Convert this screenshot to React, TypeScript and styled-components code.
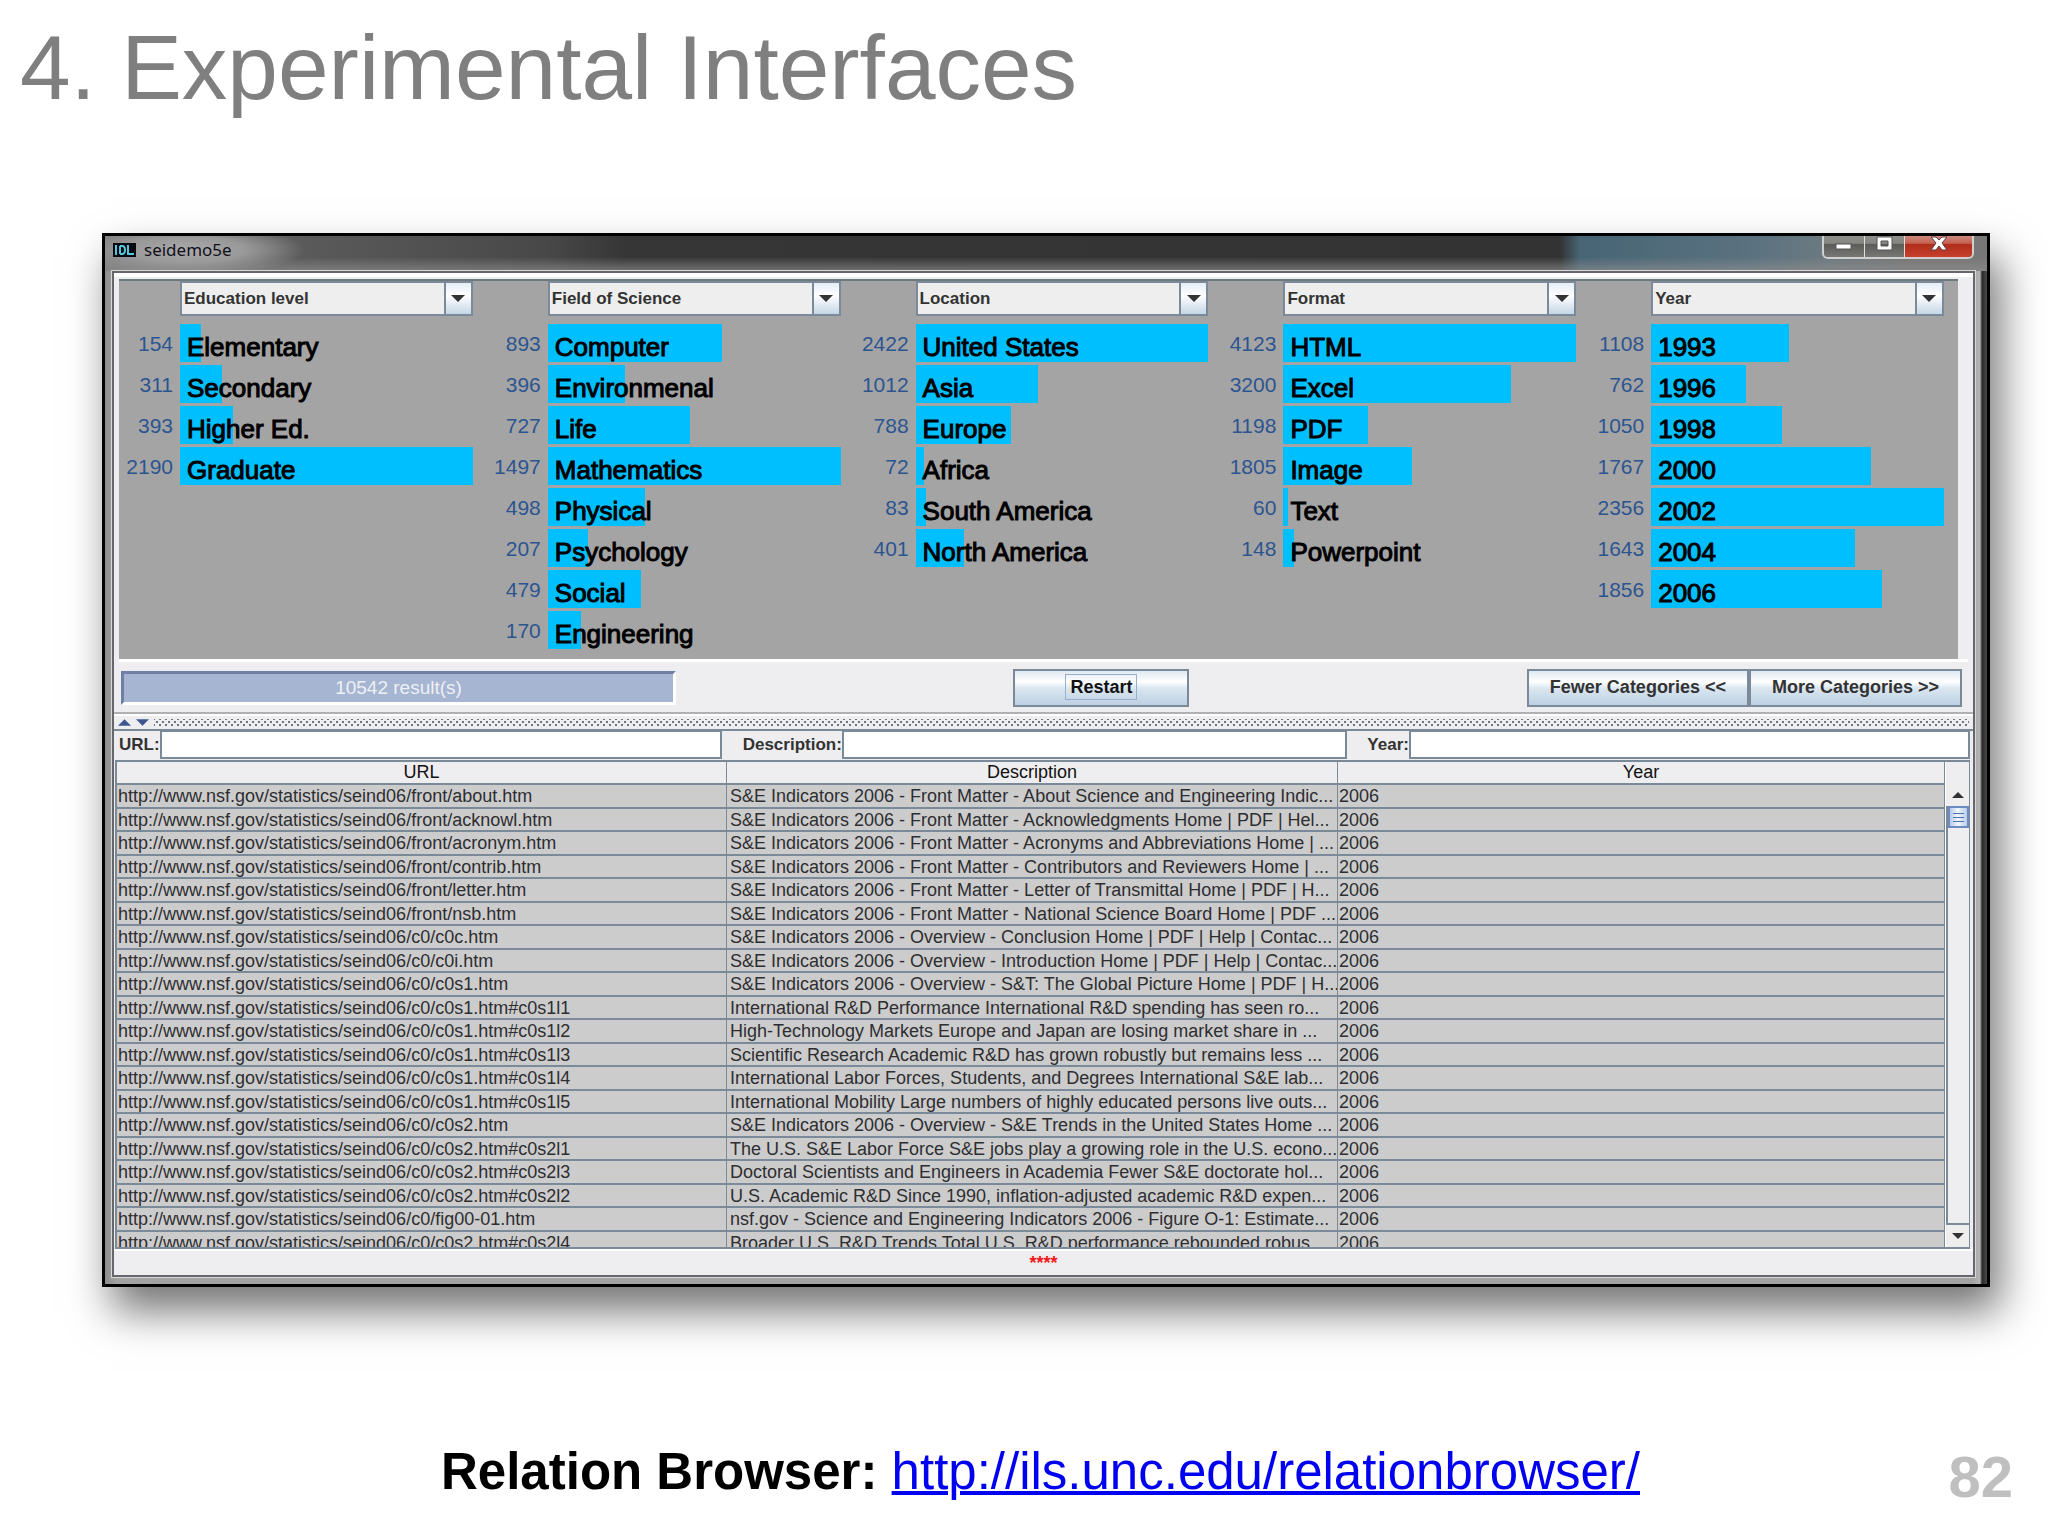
import React from "react";
import styled, { createGlobalStyle, css } from "styled-components";

const sans = '"Liberation Sans", Arial, Helvetica, sans-serif';
const steel = "#7a8a99";

const Global = createGlobalStyle`
  *, *::before, *::after { box-sizing: border-box; }
  body { margin: 0; background: #fff; font-family: ${sans}; }
`;

const Slide = styled.main`
  display: flex;
  flex-direction: column;
  min-height: 100vh;
  overflow: hidden;
`;

const Title = styled.h1`
  margin: 0;
  padding: 16px 20px 0;
  height: 233px;
  font-size: 91px;
  line-height: 104px;
  font-weight: 400;
  color: #7f7f7f;
`;

const Frame = styled.section`
  margin: 0 58px 0 102px;
  border: 3px solid #000;
  background: linear-gradient(90deg, #8d8d8d, #a3a3a3 12px, #a3a3a3 calc(100% - 14px), #b4b5b4 calc(100% - 7px), #2a2a2a calc(100% - 5px), #4a4a4a 100%);
  box-shadow: 10px 24px 40px 0 rgba(0, 0, 0, 0.55);
`;

const TitleBar = styled.header`
  display: flex;
  align-items: center;
  justify-content: space-between;
  height: 35px;
  padding: 0 13px 0 8px;
  background:
    radial-gradient(ellipse 120px 26px at 80px 14px, #aaa 0%, #999 50%, rgba(110, 110, 110, 0) 100%),
    linear-gradient(180deg, rgba(0, 0, 0, 0) 60%, rgba(140, 140, 140, 0.7) 100%),
    linear-gradient(90deg, #777 0, #5a5a5a 200px, #484848 440px, #363636 520px, #333 1455px, #476575 1475px, #5b7280 1650px, #6c7a80 1720px, #777 1800px);
`;

const AppName = styled.div`
  display: flex;
  align-items: center;
  gap: 8px;
  height: 100%;
  padding-bottom: 8px;
  font: 17px "Noto Sans", "Open Sans", sans-serif;
  color: #10101c;
`;

const WindowButtons = styled.div`
  display: flex;
  align-self: flex-start;
  height: 23px;
  border: 2px solid #d0d0d0;
  border-top: 0;
  border-radius: 0 0 6px 6px;
  overflow: hidden;
`;

const WindowButton = styled.button<{ $close?: boolean }>`
  display: flex;
  align-items: flex-start;
  justify-content: center;
  width: ${(p) => (p.$close ? 68 : 40)}px;
  height: 100%;
  padding: 0;
  border: 0;
  border-left: 1px solid #ddd;
  background: ${(p) =>
    p.$close
      ? "linear-gradient(180deg, #cc8a7e 0, #c4604f 35%, #b02e1c 40%, #c8402c 100%)"
      : "linear-gradient(180deg, #8f8f8c 0, #858582 35%, #5c5c5a 40%, #777774 100%)"};
  &:first-child { border-left: 0; }
`;

const Client = styled.div`
  margin: 0 12px 7px 7px;
  border: 2px solid #66666c;
  outline: 1px solid #d8d8d8;
  background: #eeeef0;
`;

const TopPane = styled.div`
  padding: 6px 5px 0 5px;
  border-bottom: 2px solid #b0b0b2;
  background: linear-gradient(180deg, #fff 0, #fff 4px, #eeedef 4px);
`;

const Facets = styled.div`
  display: grid;
  grid-template-columns: repeat(5, 1fr);
  height: 380px;
  margin-right: 10px;
  border-top: 2px solid #6f787c;
  background: #a5a4a5;
`;

const Facet = styled.section`
  display: grid;
  grid-template-columns: 61px 1fr;
  align-content: start;
  padding-right: 14px;
`;

const Combo = styled.label`
  grid-column: 2;
  position: relative;
  display: block;
  height: 35px;
  margin-bottom: 8px;
`;

const ComboSelect = styled.select`
  appearance: none;
  display: block;
  width: 100%;
  height: 100%;
  padding: 0 30px 0 2px;
  border: 2px solid ${steel};
  border-radius: 0;
  background: #eeeeee;
  font: bold 17px ${sans};
  color: #333;
`;

const ComboArrow = styled.span`
  position: absolute;
  top: 0;
  right: 0;
  display: grid;
  place-items: center;
  width: 29px;
  height: 35px;
  border: 2px solid ${steel};
  background: linear-gradient(180deg, #e4edf5 0, #fff 40%, #c4d6e6 100%);
  pointer-events: none;
`;

const FacetList = styled.ul`
  grid-column: 1 / -1;
  display: flex;
  flex-direction: column;
  gap: 3px;
  margin: 0;
  padding: 0;
  list-style: none;
`;

const FacetRow = styled.li`
  display: grid;
  grid-template-columns: 61px 1fr;
  height: 38px;
`;

const Count = styled.span`
  padding: 8px 7px 0 0;
  font-size: 21px;
  line-height: 24px;
  text-align: right;
  color: #2c5590;
`;

const Track = styled.span`
  display: grid;
`;

const Bar = styled.span`
  grid-area: 1 / 1;
  background: #00bfff;
`;

const FacetLabel = styled.span`
  grid-area: 1 / 1;
  padding: 8px 0 0 7px;
  font-size: 26px;
  line-height: 30px;
  color: #000;
  white-space: nowrap;
  -webkit-text-stroke: 1px #000;
`;

const Actions = styled.div`
  display: flex;
  justify-content: space-between;
  align-items: center;
  height: 53px;
  padding: 2px 6px 1px 2px;
  border-top: 3px solid #fff;
`;

const Results = styled.output`
  display: block;
  width: 555px;
  height: 34px;
  border: 3px solid;
  border-color: #6f7fa6 #fff #fff #6f7fa6;
  background: #a6b5d2;
  font-size: 19px;
  line-height: 28px;
  text-align: center;
  color: #eef0f4;
`;

const PushButton = styled.button`
  height: 38px;
  padding: 0 21px;
  border: 2px solid ${steel};
  background: linear-gradient(180deg, #dfe9f2 0, #fff 32%, #dbe7f1 50%, #bdd0e2 100%);
  font: bold 18px ${sans};
  color: #333;
  white-space: nowrap;
`;

const Restart = styled(PushButton)`
  width: 176px;
  padding: 0;
  color: #111;
  span { padding: 2px 4px; border: 1px solid #98b0cc; }
`;

const CategoryButtons = styled.div`
  display: flex;
`;

const Divider = styled.div`
  display: flex;
  align-items: flex-start;
  gap: 5px;
  height: 17px;
  padding: 3px 4px 0;
  border-top: 2px solid #fff;
  border-bottom: 2px solid ${steel};
`;

const Grip = styled.span`
  flex: 1;
  height: 8px;
  background-image: radial-gradient(circle, #6e7480 1px, transparent 1px), radial-gradient(circle, #6e7480 1px, transparent 1px);
  background-size: 6px 6px;
  background-position: 0 0, 3px 3px;
`;

const Filters = styled.form`
  display: grid;
  grid-template-columns: 609fr 623fr 623fr;
  height: 28px;
  padding: 0 3px 0 2px;
`;

const Filter = styled.label<{ $lead?: number; $tail?: number }>`
  display: flex;
  align-items: center;
  padding-left: ${(p) => p.$lead ?? 3}px;
  padding-right: ${(p) => p.$tail ?? 0}px;
  font-size: 17px;
  font-weight: 700;
  color: #333;
`;

const FilterInput = styled.input`
  flex: 1;
  min-width: 0;
  height: 28px;
  border: 2px solid ${steel};
  border-top-width: 1px;
  background: #fff;
  font: 17px ${sans};
`;

const Grid = styled.div`
  display: grid;
  grid-template-columns: 1fr 24px;
  height: 489px;
  margin: 1px 3px 0 1px;
  border: 2px solid ${steel};
  border-right-width: 1px;
  overflow: hidden;
`;

const TableClip = styled.div`
  overflow: hidden;
`;

const Table = styled.table`
  width: 100%;
  table-layout: fixed;
  border-collapse: separate;
  border-spacing: 0;
  font-size: 18px;
  color: #2e2e30;
`;

const line = css`
  border-right: 1px solid ${steel};
  border-bottom: 2px solid ${steel};
`;

const Th = styled.th<{ $w?: string }>`
  ${line}
  width: ${(p) => p.$w ?? "auto"};
  height: 23px;
  padding: 0;
  background: #eeeef0;
  line-height: 21px;
  font-weight: 400;
  color: #111;
`;

const Row = styled.tr`
  height: 24px;
  line-height: 20px;
  background: #cccccd;
  &:nth-child(even) { height: 23px; }
`;

const Td = styled.td<{ $indent?: number }>`
  ${line}
  padding: 0 0 0 ${(p) => p.$indent ?? 1}px;
  white-space: nowrap;
  overflow: hidden;
`;

const ScrollBar = styled.div`
  display: flex;
  flex-direction: column;
  padding-top: 22px;
  border-left: 1px solid #fff;
`;

const ScrollButton = styled.button`
  display: grid;
  place-items: center;
  height: 22px;
  padding: 0;
  border: 0;
  background: #eee;
`;

const ScrollTrack = styled.div`
  flex: 1;
  border-left: 2px solid ${steel};
  border-bottom: 2px solid ${steel};
  background: #eeeef0;
`;

const Thumb = styled.div`
  display: flex;
  flex-direction: column;
  justify-content: center;
  gap: 3px;
  height: 22px;
  padding: 0 3px;
  border: 2px solid #6c8cc0;
  background: linear-gradient(90deg, #b5cbe8, #f2f6fb 45%, #b9cfe8);
`;

const ThumbLine = styled.span`
  height: 1px;
  background: #4f73b5;
`;

const Status = styled.p`
  margin: 0;
  height: 26px;
  border-top: 2px solid #fff;
  font-size: 18px;
  line-height: 25px;
  font-weight: 700;
  text-align: center;
  color: #f01818;
`;

const Caption = styled.footer`
  display: flex;
  align-items: flex-end;
  margin-top: auto;
  padding: 0 35px 32px 441px;
  line-height: 64px;
  font-size: 51px;
  white-space: pre;
`;

const Lead = styled.strong`
  color: #000;
`;

const Link = styled.a`
  color: #0000f0;
  text-decoration: underline;
  text-decoration-thickness: 4px;
`;

const PageNumber = styled.span`
  margin-left: auto;
  font-size: 58px;
  line-height: 54px;
  font-weight: 700;
  color: #bfbfbf;
`;

type FacetData = { name: string; items: [string, number][] };

const facets: FacetData[] = [
  { name: "Education level", items: [["Elementary", 154], ["Secondary", 311], ["Higher Ed.", 393], ["Graduate", 2190]] },
  {
    name: "Field of Science",
    items: [["Computer", 893], ["Environmenal", 396], ["Life", 727], ["Mathematics", 1497], ["Physical", 498], ["Psychology", 207], ["Social", 479], ["Engineering", 170]],
  },
  {
    name: "Location",
    items: [["United States", 2422], ["Asia", 1012], ["Europe", 788], ["Africa", 72], ["South America", 83], ["North America", 401]],
  },
  { name: "Format", items: [["HTML", 4123], ["Excel", 3200], ["PDF", 1198], ["Image", 1805], ["Text", 60], ["Powerpoint", 148]] },
  {
    name: "Year",
    items: [["1993", 1108], ["1996", 762], ["1998", 1050], ["2000", 1767], ["2002", 2356], ["2004", 1643], ["2006", 1856]],
  },
];

const base = "http://www.nsf.gov/statistics/seind06/";

const rows: [string, string][] = [
  ["front/about.htm", "S&E Indicators 2006 - Front Matter - About Science and Engineering Indic..."],
  ["front/acknowl.htm", "S&E Indicators 2006 - Front Matter - Acknowledgments Home | PDF | Hel..."],
  ["front/acronym.htm", "S&E Indicators 2006 - Front Matter - Acronyms and Abbreviations Home | ..."],
  ["front/contrib.htm", "S&E Indicators 2006 - Front Matter - Contributors and Reviewers Home | ..."],
  ["front/letter.htm", "S&E Indicators 2006 - Front Matter - Letter of Transmittal Home | PDF | H..."],
  ["front/nsb.htm", "S&E Indicators 2006 - Front Matter - National Science Board Home | PDF ..."],
  ["c0/c0c.htm", "S&E Indicators 2006 - Overview - Conclusion Home | PDF | Help | Contac..."],
  ["c0/c0i.htm", "S&E Indicators 2006 - Overview - Introduction Home | PDF | Help | Contac..."],
  ["c0/c0s1.htm", "S&E Indicators 2006 - Overview - S&T: The Global Picture Home | PDF | H..."],
  ["c0/c0s1.htm#c0s1l1", "International R&D Performance International R&D spending has seen ro..."],
  ["c0/c0s1.htm#c0s1l2", "High-Technology Markets Europe and Japan are losing market share in ..."],
  ["c0/c0s1.htm#c0s1l3", "Scientific Research Academic R&D has grown robustly but remains less ..."],
  ["c0/c0s1.htm#c0s1l4", "International Labor Forces, Students, and Degrees International S&E lab..."],
  ["c0/c0s1.htm#c0s1l5", "International Mobility Large numbers of highly educated persons live outs..."],
  ["c0/c0s2.htm", "S&E Indicators 2006 - Overview - S&E Trends in the United States Home ..."],
  ["c0/c0s2.htm#c0s2l1", "The U.S. S&E Labor Force S&E jobs play a growing role in the U.S. econo..."],
  ["c0/c0s2.htm#c0s2l3", "Doctoral Scientists and Engineers in Academia Fewer S&E doctorate hol..."],
  ["c0/c0s2.htm#c0s2l2", "U.S. Academic R&D Since 1990, inflation-adjusted academic R&D expen..."],
  ["c0/fig00-01.htm", "nsf.gov - Science and Engineering Indicators 2006 - Figure O-1: Estimate..."],
  ["c0/c0s2.htm#c0s2l4", "Broader U.S. R&D Trends Total U.S. R&D performance rebounded robus..."],
];

const Triangle = ({ up, w = 14, h = 7, fill = "#333" }: { up?: boolean; w?: number; h?: number; fill?: string }) => (
  <svg width={w} height={h} viewBox="0 0 14 7" aria-hidden="true">
    <path d={up ? "M0 7L7 0L14 7Z" : "M0 0L7 7L14 0Z"} fill={fill} />
  </svg>
);

const AppIcon = () => (
  <svg width="23" height="14" viewBox="0 0 23 14" aria-hidden="true">
    <rect width="23" height="14" fill="#050a10" />
    <path d="M3 2V12M7 3V11M7 3H9Q12 3 12 7T9 11H7M15 2V11H21" fill="none" stroke="#57c4dc" strokeWidth="2" />
  </svg>
);

const FacetColumn = ({ facet }: { facet: FacetData }) => {
  const max = Math.max(...facet.items.map(([, n]) => n));
  return (
    <Facet>
      <Combo>
        <ComboSelect aria-label={`Category: ${facet.name}`} defaultValue={facet.name}>
          <option>{facet.name}</option>
        </ComboSelect>
        <ComboArrow>
          <Triangle />
        </ComboArrow>
      </Combo>
      <FacetList>
        {facet.items.map(([label, n]) => (
          <FacetRow key={label}>
            <Count>{n}</Count>
            <Track>
              <Bar style={{ width: `${(n / max) * 100}%` }} />
              <FacetLabel>{label}</FacetLabel>
            </Track>
          </FacetRow>
        ))}
      </FacetList>
    </Facet>
  );
};

export default function App() {
  return (
    <Slide>
      <Global />
      <Title>4. Experimental Interfaces</Title>
      <Frame>
        <TitleBar>
          <AppName>
            <AppIcon />
            seidemo5e
          </AppName>
          <WindowButtons>
            <WindowButton aria-label="Minimize">
              <svg width="18" height="16" viewBox="0 0 18 16"><rect x="1" y="8" width="15" height="5" fill="#fff" stroke="#555" /></svg>
            </WindowButton>
            <WindowButton aria-label="Maximize">
              <svg width="18" height="16" viewBox="0 0 18 16">
                <path d="M1 1H16V14H1ZM5 5V10H12V5Z" fill="#fff" fillRule="evenodd" stroke="#555" />
              </svg>
            </WindowButton>
            <WindowButton $close aria-label="Close">
              <svg width="18" height="16" viewBox="0 0 18 16">
                <path d="M1 1H6L9 4L12 1H17L12 7L17 14H12L9 10L6 14H1L6 7Z" fill="#fff" stroke="#5d3b45" />
              </svg>
            </WindowButton>
          </WindowButtons>
        </TitleBar>
        <Client>
          <TopPane>
            <Facets>
              {facets.map((f) => (
                <FacetColumn key={f.name} facet={f} />
              ))}
            </Facets>
            <Actions>
              <Results>10542 result(s)</Results>
              <Restart><span>Restart</span></Restart>
              <CategoryButtons>
                <PushButton>Fewer Categories &lt;&lt;</PushButton>
                <PushButton>More Categories &gt;&gt;</PushButton>
              </CategoryButtons>
            </Actions>
          </TopPane>
          <Divider>
            <Triangle up w={13} h={7} fill="#3d568f" />
            <Triangle w={13} h={7} fill="#3d568f" />
            <Grip />
          </Divider>
          <Filters>
            <Filter $tail={3}>URL:<FilterInput /></Filter>
            <Filter $lead={18}>Description:<FilterInput /></Filter>
            <Filter $lead={20}>Year:<FilterInput /></Filter>
          </Filters>
          <Grid>
            <TableClip>
              <Table>
                <thead>
                  <tr>
                    <Th $w="610px">URL</Th>
                    <Th $w="611px">Description</Th>
                    <Th>Year</Th>
                  </tr>
                </thead>
                <tbody>
                  {rows.map(([path, text]) => (
                    <Row key={path}>
                      <Td>{base + path}</Td>
                      <Td $indent={3}>{text}</Td>
                      <Td>2006</Td>
                    </Row>
                  ))}
                </tbody>
              </Table>
            </TableClip>
            <ScrollBar>
              <ScrollButton aria-label="Scroll up"><Triangle up w={12} h={6} /></ScrollButton>
              <ScrollTrack>
                <Thumb><ThumbLine /><ThumbLine /><ThumbLine /></Thumb>
              </ScrollTrack>
              <ScrollButton aria-label="Scroll down"><Triangle w={12} h={6} /></ScrollButton>
            </ScrollBar>
          </Grid>
          <Status>****</Status>
        </Client>
      </Frame>
      <Caption>
        <Lead>Relation Browser: </Lead>
        <Link href="http://ils.unc.edu/relationbrowser/">http://ils.unc.edu/relationbrowser/</Link>
        <PageNumber>82</PageNumber>
      </Caption>
    </Slide>
  );
}
